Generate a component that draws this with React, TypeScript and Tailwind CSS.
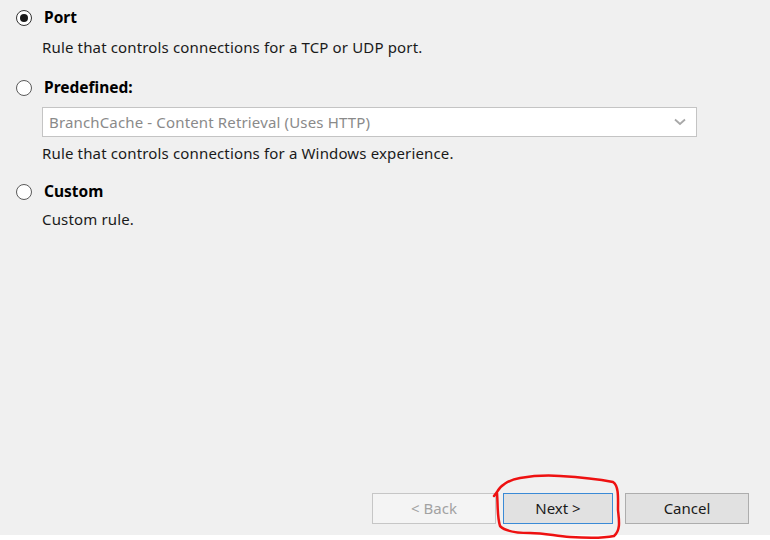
import React from 'react';

const font = { fontFamily: '"Noto Sans", "Liberation Sans", Arial, sans-serif' };

const Radio = ({ checked }: { checked?: boolean }) => (
  <span className={`w-[16px] h-[16px] rounded-full border flex items-center justify-center bg-white ${checked ? 'border-[#333333]' : 'border-[#5a5a5a]'}`}>
    {checked && <span className="w-[8px] h-[8px] rounded-full bg-[#1a1a1a]"></span>}
  </span>
);

const Option = ({ label, checked }: { label: string; checked?: boolean }) => (
  <div className="flex items-center h-[20px] pl-[16px]">
    <Radio checked={checked} />
    <span className="ml-[12px] font-bold text-[15.5px] text-black">{label}</span>
  </div>
);

const Desc = ({ children }: { children: React.ReactNode }) => (
  <div className="h-[20px] flex items-center pl-[42px] text-[15px] tracking-[0.15px] text-[#1a1a1a]">{children}</div>
);

const App: React.FC = () => {
  return (
    <div className="w-[770px] h-[540px] bg-white relative" style={font}>
      <div className="h-[535px] bg-[#f0f0f0] flex flex-col pt-[8px]">
        <Option label="Port" checked />
        <div className="mt-[9px]"><Desc>Rule that controls connections for a TCP or UDP port.</Desc></div>

        <div className="mt-[21px]"><Option label="Predefined:" /></div>
        <div className="mt-[9px] ml-[42px] w-[655px] h-[30px] bg-white border border-[#c4c4c4] flex items-center justify-between pl-[6px] pr-[10px]">
          <span className="text-[15px] tracking-[0.15px] text-[#8a8a8a]">BranchCache - Content Retrieval (Uses HTTP)</span>
          <svg width="12" height="8" viewBox="0 0 12 8">
            <path d="M1 1.5 L6 6 L11 1.5" fill="none" stroke="#a8a8a8" strokeWidth="1.8" />
          </svg>
        </div>
        <div className="mt-[6px]"><Desc>Rule that controls connections for a Windows experience.</Desc></div>

        <div className="mt-[19px]"><Option label="Custom" /></div>
        <div className="mt-[7px]"><Desc>Custom rule.</Desc></div>

        <div className="mt-auto mb-[11px] flex justify-end pr-[21px] text-[15px]">
          <button className="w-[124px] h-[31px] bg-[#f4f4f4] border border-[#c6c6c6] text-[#a2a2a2]">&lt; Back</button>
          <button className="ml-[7px] w-[110px] h-[31px] bg-[#e1e1e1] border border-[#3a8ad6] text-[#1a1a1a]">Next &gt;</button>
          <button className="ml-[12px] w-[124px] h-[31px] bg-[#e1e1e1] border border-[#adadad] text-[#1a1a1a]">Cancel</button>
        </div>
      </div>

      <svg className="absolute left-0 top-0 pointer-events-none" width="770" height="540">
        <path
          d="M494 496 L497 492 C500 486 508 480 520 478 C532 476 545 475 560 476 C578 477 598 479 613 482 C619 486 618 498 618 510 C619 520 621 530 614 536 C600 539 585 538 570 537 C555 536 545 533 530 533 C518 533 506 532 500 526 C497 516 498 505 497 493"
          fill="none"
          stroke="#ee1111"
          strokeWidth="2.5"
          strokeLinecap="round"
          strokeLinejoin="round"
        />
      </svg>
    </div>
  );
};

export default App;
